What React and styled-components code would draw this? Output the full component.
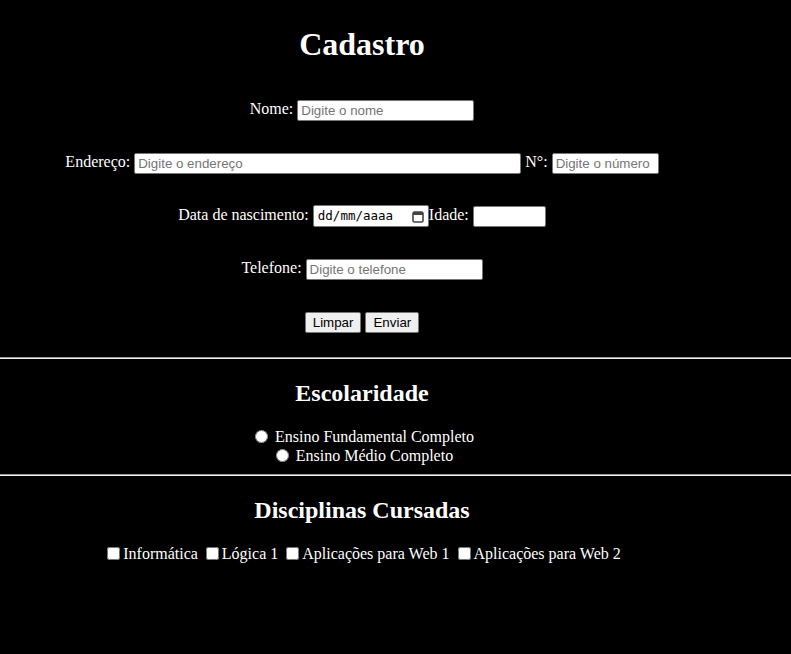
import React from "react"
import styled, { createGlobalStyle } from 'styled-components';

const GlobalStyle = createGlobalStyle`
  body {
    margin: 0;
    background: #000;
    color: #fff;
    font-family: "Liberation Serif", "Times New Roman", serif;
    font-size: 16px;
  }
`

const Page = styled.div`
  background: #000;
  min-height: 654px;
`

const Section = styled.section`
  width: 724px;
  text-align: center;
`

const Title = styled.h1`
  margin: 0;
  padding-top: 26px;
  font-size: 32px;
  line-height: 37px;
`

const Form = styled.form`
  display: flex;
  flex-direction: column;
  gap: 31px;
  margin-top: 35px;
  padding-bottom: 25px;
`

const Row = styled.div`
  height: 22px;
  line-height: 22px;
  white-space: nowrap;
`

const TextInput = styled.input`
  box-sizing: border-box;
  width: ${props => props.$width}px;
  height: 21px;
  padding: 1px 3px;
  border: 1px solid #767676;
  border-radius: 2px;
  background: #fff;
  color: #000;
  font-family: "Liberation Sans", Arial, sans-serif;
  font-size: 13.333px;
  vertical-align: middle;
  outline: none;

  &::placeholder {
    color: #757575;
  }
`

const DateField = styled.span`
  box-sizing: border-box;
  display: inline-flex;
  align-items: center;
  justify-content: space-between;
  width: 116px;
  height: 22px;
  padding: 0 4px;
  border: 1px solid #767676;
  border-radius: 2px;
  background: #fff;
  color: #000;
  font-family: "DejaVu Sans Mono", "Liberation Mono", monospace;
  font-size: 12.5px;
  line-height: 20px;
  vertical-align: middle;
`

const Button = styled.button`
  box-sizing: border-box;
  height: 21px;
  padding: 1px 7px;
  border: 1px solid #767676;
  border-radius: 2px;
  background: #efefef;
  color: #000;
  font-family: "Liberation Sans", Arial, sans-serif;
  font-size: 13.333px;
  vertical-align: middle;
`

const Rule = styled.hr`
  margin: 0;
  border: 0;
  border-top: 1px solid #9a9a9a;
  border-bottom: 1px solid #eeeeee;
  height: 0;
`

const Heading = styled.h2`
  margin: 20px 0;
  font-size: 24px;
  line-height: 28px;
`

const ChoiceList = styled.div`
  line-height: 19px;
  padding-bottom: ${props => props.$bottom || 0}px;
`

const Radio = styled.input.attrs({ type: 'radio' })`
  margin: 0 3px 0 5px;
  width: 13px;
  height: 13px;
  vertical-align: -1px;
`

const Checkbox = styled.input.attrs({ type: 'checkbox' })`
  margin: 0 3px 0 4px;
  width: 13px;
  height: 13px;
  vertical-align: -1px;
`

const CalendarIcon = () => (
  <svg width="12" height="13" viewBox="0 0 12 13" fill="none">
    <rect x="1" y="2" width="10" height="10" rx="1.5" stroke="#444" strokeWidth="1.6" />
    <rect x="1" y="2" width="10" height="3" fill="#444" />
  </svg>
)

export default function App() {
  return (
    <Page>
      <GlobalStyle />
      <Section>
        <Title>Cadastro</Title>
        <Form onSubmit={e => e.preventDefault()}>
          <Row>
            Nome: <TextInput $width={177} placeholder="Digite o nome" />
          </Row>
          <Row>
            Endereço: <TextInput $width={387} placeholder="Digite o endereço" /> N°: <TextInput $width={107} placeholder="Digite o número" />
          </Row>
          <Row>
            Data de nascimento: <DateField>dd/mm/aaaa<CalendarIcon /></DateField>Idade: <TextInput $width={73} />
          </Row>
          <Row>
            Telefone: <TextInput $width={177} placeholder="Digite o telefone" />
          </Row>
          <Row>
            <Button type="reset">Limpar</Button> <Button type="submit">Enviar</Button>
          </Row>
        </Form>
      </Section>
      <Rule />
      <Section>
        <Heading>Escolaridade</Heading>
        <ChoiceList $bottom={9}>
          <Radio name="escolaridade" /> Ensino Fundamental Completo<br />
          <Radio name="escolaridade" /> Ensino Médio Completo
        </ChoiceList>
      </Section>
      <Rule />
      <Section>
        <Heading>Disciplinas Cursadas</Heading>
        <ChoiceList>
          <Checkbox />Informática <Checkbox />Lógica 1 <Checkbox />Aplicações para Web 1 <Checkbox />Aplicações para Web 2
        </ChoiceList>
      </Section>
    </Page>
  )
}
